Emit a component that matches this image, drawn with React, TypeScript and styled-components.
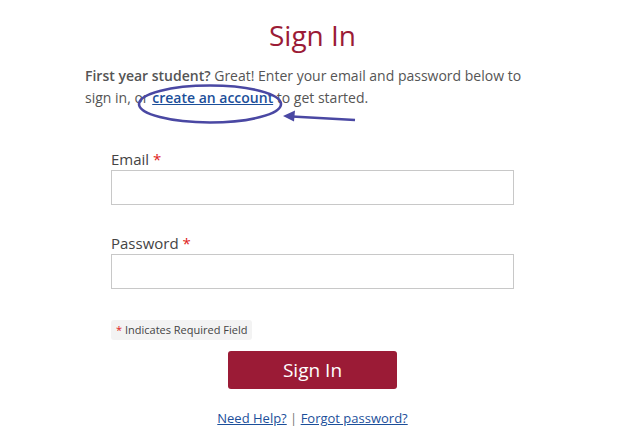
import styled, { createGlobalStyle } from "styled-components";

const GlobalStyle = createGlobalStyle`
  body {
    margin: 0;
    background: #fff;
    font-family: "Open Sans", "Liberation Sans", sans-serif;
  }
`;

const Page = styled.div`
  position: relative;
  width: 636px;
  height: 442px;
  overflow: hidden;
`;

const Column = styled.div`
  width: 455px;
  margin-left: 85px;
  padding-top: 16px;
`;

const Title = styled.h1`
  margin: 0;
  font-size: 28px;
  font-weight: 400;
  line-height: 38px;
  text-align: center;
  color: #9b1b36;
`;

const Intro = styled.p`
  margin: 11px 0 0;
  font-size: 14px;
  line-height: 22px;
  color: #555;
  b {
    font-weight: 600;
  }
`;

const IntroLink = styled.a`
  color: #1c4f9a;
  font-weight: 600;
  text-decoration: underline;
`;

const Form = styled.form`
  margin: 40px 26px 0;
  display: flex;
  flex-direction: column;
`;

const Field = styled.div<{ $gap: number }>`
  display: flex;
  flex-direction: column;
  margin-bottom: ${(p) => p.$gap}px;
`;

const Label = styled.label`
  font-size: 15px;
  line-height: 20px;
  color: #444;
  margin-bottom: 1px;
`;

const Star = styled.span`
  color: #e02020;
`;

const Input = styled.input`
  box-sizing: border-box;
  height: 35px;
  width: 100%;
  border: 1px solid #c8c8c8;
  background: #fff;
  margin: 0;
`;

const Note = styled.div`
  align-self: flex-start;
  background: #f3f3f3;
  border-radius: 3px;
  padding: 0 5px;
  font-size: 11px;
  line-height: 20px;
  color: #444;
`;

const Button = styled.button`
  align-self: center;
  margin-top: 11px;
  width: 169px;
  height: 38px;
  border: none;
  border-radius: 3px;
  background: #9b1b36;
  color: #fff;
  font-family: inherit;
  font-size: 19px;
`;

const Links = styled.div`
  margin-top: 20px;
  text-align: center;
  font-size: 13px;
  color: #777;
  a {
    color: #1c4f9a;
    text-decoration: underline;
  }
`;

const Annotation = styled.svg`
  position: absolute;
  left: 0;
  top: 0;
  pointer-events: none;
`;

export default function App() {
  return (
    <Page>
      <GlobalStyle />
      <Column>
        <Title>Sign In</Title>
        <Intro>
          <b>First year student?</b> Great! Enter your email and password below to sign in, or{" "}
          <IntroLink href="#">create an account</IntroLink> to get started.
        </Intro>
        <Form>
          <Field $gap={28}>
            <Label>
              Email <Star>*</Star>
            </Label>
            <Input type="email" />
          </Field>
          <Field $gap={31}>
            <Label>
              Password <Star>*</Star>
            </Label>
            <Input type="password" />
          </Field>
          <Note>
            <Star>*</Star> Indicates Required Field
          </Note>
          <Button type="button">Sign In</Button>
          <Links>
            <a href="#">Need Help?</a> | <a href="#">Forgot password?</a>
          </Links>
        </Form>
      </Column>
      <Annotation width="636" height="442">
        <ellipse cx="210" cy="104" rx="71" ry="18.5" fill="none" stroke="#4a48a3" strokeWidth="2.6" />
        <path d="M355 120 L292 116.5" stroke="#4a48a3" strokeWidth="2.4" fill="none" />
        <path d="M283 116 L295 110.5 L294 121.5 Z" fill="#4a48a3" />
      </Annotation>
    </Page>
  );
}
